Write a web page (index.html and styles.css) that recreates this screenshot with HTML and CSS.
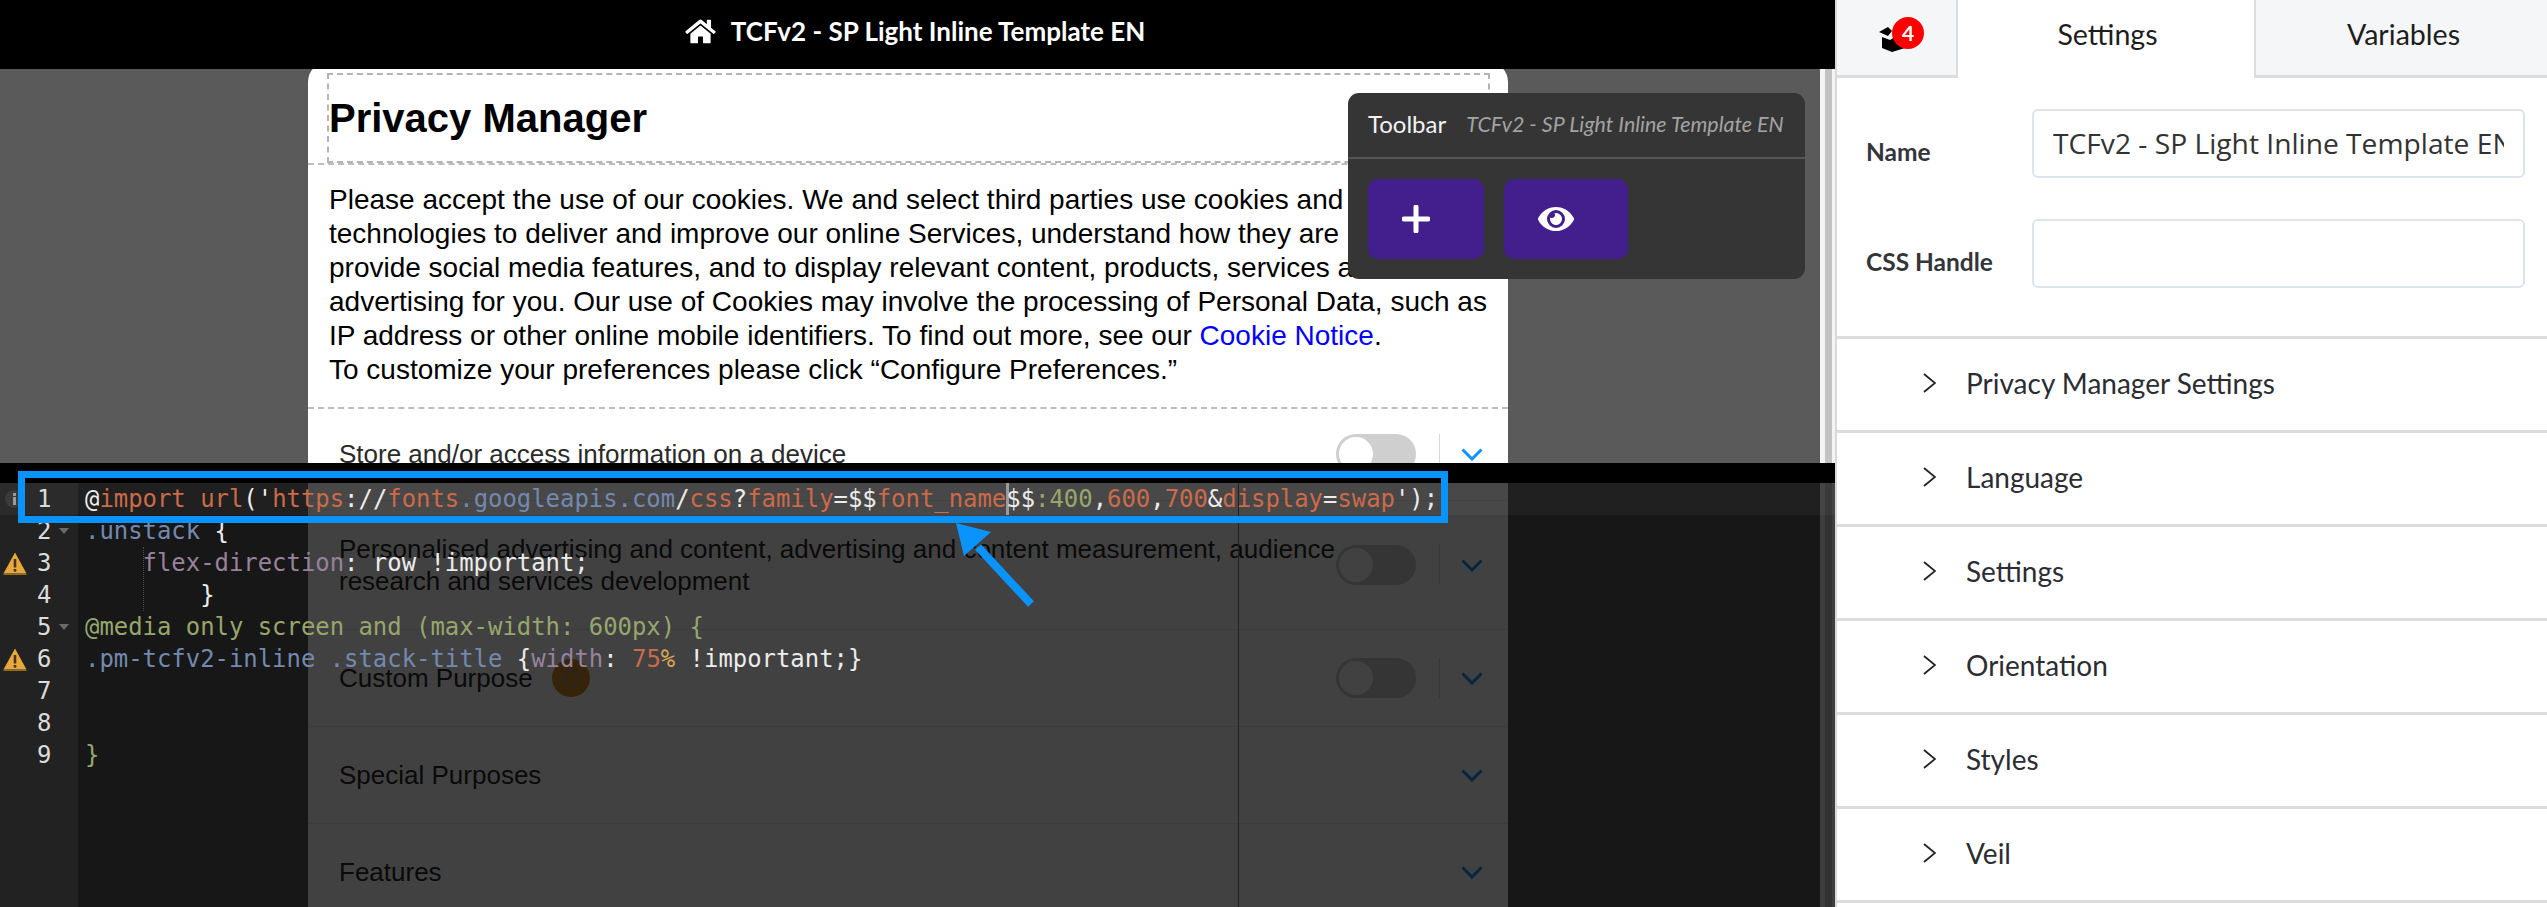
FILE: index.html
```html
<!DOCTYPE html>
<html lang="en">
<head>
<meta charset="utf-8">
<title>TCFv2 - SP Light Inline Template EN</title>
<link rel="stylesheet" href="styles.css">
</head>
<body>
<div class="app">
  <main class="stage">
    <header class="topbar">
      <svg class="home" viewBox="0 0 576 512"><path d="M280.37 148.26L96 300.11V464a16 16 0 0 0 16 16l112.06-.29a16 16 0 0 0 15.92-16V368a16 16 0 0 1 16-16h64a16 16 0 0 1 16 16v95.64a16 16 0 0 0 16 16.05L464 480a16 16 0 0 0 16-16V300L295.67 148.26a12.19 12.19 0 0 0-15.3 0zM571.6 251.47L488 182.56V44.05a12 12 0 0 0-12-12h-56a12 12 0 0 0-12 12v72.61L318.47 43a48 48 0 0 0-61 0L4.34 251.47a12 12 0 0 0-1.6 16.9l25.5 31A12 12 0 0 0 45.15 301l235.22-193.74a12.19 12.19 0 0 1 15.3 0L530.9 301a12 12 0 0 0 16.9-1.6l25.5-31a12 12 0 0 0-1.7-16.93z"/></svg>
      <span class="topbar-title">TCFv2 - SP Light Inline Template EN</span>
    </header>
    <div class="canvas">
      <section class="card">
        <div class="title-section">
          <div class="title-box"><h1 class="title">Privacy Manager</h1></div>
        </div>
        <div class="intro">
          <p class="intro-line">Please accept the use of our cookies. We and select third parties use cookies and similar</p>
          <p class="intro-line">technologies to deliver and improve our online Services, understand how they are used, to</p>
          <p class="intro-line">provide social media features, and to display relevant content, products, services and</p>
          <p class="intro-line">advertising for you. Our use of Cookies may involve the processing of Personal Data, such as</p>
          <p class="intro-line">IP address or other online mobile identifiers. To find out more, see our <a class="link">Cookie Notice</a>.</p>
          <p class="intro-line">To customize your preferences please click “Configure Preferences.”</p>
        </div>
        <div class="rows">
          <div class="row row-first">
            <div class="row-label">Store and/or access information on a device</div>
            <div class="toggle"><span class="knob"></span></div>
            <div class="row-divider"></div>
            <svg class="chev" viewBox="0 0 22 13"><path d="M1.5 1.5L11 11l9.5-9.5"/></svg>
          </div>
          <div class="row">
            <div class="row-label">Personalised advertising and content, advertising and content measurement, audience<br>research and services development</div>
            <div class="toggle"><span class="knob"></span></div>
            <div class="row-divider"></div>
            <svg class="chev" viewBox="0 0 22 13"><path d="M1.5 1.5L11 11l9.5-9.5"/></svg>
          </div>
          <div class="row">
            <div class="row-label row-label-badged">Custom Purpose<span class="custom-badge">C</span></div>
            <div class="toggle"><span class="knob"></span></div>
            <div class="row-divider"></div>
            <svg class="chev" viewBox="0 0 22 13"><path d="M1.5 1.5L11 11l9.5-9.5"/></svg>
          </div>
          <div class="row">
            <div class="row-label">Special Purposes</div>
            <svg class="chev" viewBox="0 0 22 13"><path d="M1.5 1.5L11 11l9.5-9.5"/></svg>
          </div>
          <div class="row">
            <div class="row-label">Features</div>
            <svg class="chev" viewBox="0 0 22 13"><path d="M1.5 1.5L11 11l9.5-9.5"/></svg>
          </div>
        </div>
      </section>
      <div class="scroll-track"><span class="scroll-thumb"></span></div>
    </div>

    <div class="toolbar">
      <div class="toolbar-head">
        <span class="toolbar-name">Toolbar</span>
        <span class="toolbar-sub">TCFv2 - SP Light Inline Template EN</span>
      </div>
      <div class="toolbar-actions">
        <button class="tool tool-add"><svg class="plus" viewBox="0 0 28 28"><path d="M14 2v24M2 14h24"/></svg></button>
        <button class="tool tool-view"><svg class="eye" viewBox="0 0 576 512"><path d="M572.52 241.4C518.29 135.59 410.93 64 288 64S57.68 135.64 3.48 241.41a32.35 32.35 0 0 0 0 29.19C57.71 376.41 165.07 448 288 448s230.32-71.64 284.52-177.41a32.35 32.35 0 0 0 0-29.19zM288 400a144 144 0 1 1 144-144 143.93 143.93 0 0 1-144 144zm0-240a95.31 95.31 0 0 0-25.31 3.79 47.85 47.85 0 0 1-66.9 66.9A95.78 95.78 0 1 0 288 160z"/></svg></button>
      </div>
    </div>

    <div class="editor">
      <div class="editor-bar"></div>
      <div class="editor-body">
        <div class="active-line"></div>
        <div class="print-margin"></div>
        <div class="gutter">
          <div class="gl"><span class="gi"><svg class="info" viewBox="0 0 22 22"><circle cx="11" cy="11" r="9" fill="#3a3a3a"/><rect x="10" y="9" width="3" height="8" fill="#9a9a9a"/><rect x="10" y="5" width="3" height="3" fill="#9a9a9a"/></svg></span><span class="num">1</span></div>
          <div class="gl"><span class="gi"></span><span class="num">2</span><span class="fold"></span></div>
          <div class="gl"><span class="gi"><svg class="warn" viewBox="0 0 24 24"><path d="M12 1.5L23.5 22.5H.5z" fill="#e8a93a"/><path d="M.5 22.5h23v1.5H.5z" fill="#8f6a26"/><rect x="10.7" y="8" width="2.6" height="8.5" fill="#4a3410"/><rect x="10.7" y="18" width="2.6" height="2.6" fill="#4a3410"/></svg></span><span class="num">3</span></div>
          <div class="gl"><span class="gi"></span><span class="num">4</span></div>
          <div class="gl"><span class="gi"></span><span class="num">5</span><span class="fold"></span></div>
          <div class="gl"><span class="gi"><svg class="warn" viewBox="0 0 24 24"><path d="M12 1.5L23.5 22.5H.5z" fill="#e8a93a"/><path d="M.5 22.5h23v1.5H.5z" fill="#8f6a26"/><rect x="10.7" y="8" width="2.6" height="8.5" fill="#4a3410"/><rect x="10.7" y="18" width="2.6" height="2.6" fill="#4a3410"/></svg></span><span class="num">6</span></div>
          <div class="gl"><span class="gi"></span><span class="num">7</span></div>
          <div class="gl"><span class="gi"></span><span class="num">8</span></div>
          <div class="gl"><span class="gi"></span><span class="num">9</span></div>
        </div>
        <div class="code">
          <div class="cl"><span class="w">@</span><span class="o">import url</span><span class="w">('</span><span class="o">https</span><span class="w">://</span><span class="o">fonts</span><span class="b">.googleapis.com</span><span class="w">/</span><span class="o">css</span><span class="w">?</span><span class="o">family</span><span class="w">=$$</span><span class="o">font_name</span><span class="caret"></span><span class="w">$$</span><span class="g">:400</span><span class="w">,</span><span class="o">600</span><span class="w">,</span><span class="o">700</span><span class="w">&amp;</span><span class="o">display</span><span class="w">=</span><span class="o">swap</span><span class="w">');</span></div>
          <div class="cl"><span class="b">.unstack</span> <span class="w">{</span></div>
          <div class="cl">    <span class="m">flex-direction</span><span class="w">: row !important;</span></div>
          <div class="cl">        <span class="w">}</span></div>
          <div class="cl"><span class="g">@media only screen and (max-width: 600px) {</span></div>
          <div class="cl"><span class="b">.pm-tcfv2-inline .stack-title</span> <span class="w">{</span><span class="m">width</span><span class="w">:</span> <span class="o">75</span><span class="y">%</span> <span class="w">!important;}</span></div>
          <div class="cl"> </div>
          <div class="cl"> </div>
          <div class="cl"><span class="g">}</span></div>
        </div>
        <span class="indent-guide"></span>
      </div>
    </div>

    <div class="callout-box"></div>
    <svg class="callout-arrow" viewBox="0 0 76 82"><path class="shaft" d="M75 81L22 24"/><path class="head" d="M0 0L35 9L8 33z"/></svg>
  </main>

  <aside class="panel">
    <nav class="tabs">
      <div class="tab tab-icon">
        <span class="box-wrap">
          <svg class="box" viewBox="0 0 26 26"><path d="M0 6L9 1l4 4-4 5z M3 11l8 3 5-3v-5l10 2v14l-13 4-10-4z"/></svg>
          <span class="badge">4</span>
        </span>
      </div>
      <div class="tab tab-active">Settings</div>
      <div class="tab tab-last">Variables</div>
    </nav>
    <div class="fields">
      <div class="field"><label class="field-label">Name</label><div class="input"><span class="input-text">TCFv2 - SP Light Inline Template EN</span></div></div>
      <div class="field"><label class="field-label">CSS Handle</label><div class="input"></div></div>
    </div>
    <div class="acc"><svg class="acc-chev" viewBox="0 0 13 20"><path d="M1 1l11 9L1 19"/></svg>Privacy Manager Settings</div>
    <div class="acc"><svg class="acc-chev" viewBox="0 0 13 20"><path d="M1 1l11 9L1 19"/></svg>Language</div>
    <div class="acc"><svg class="acc-chev" viewBox="0 0 13 20"><path d="M1 1l11 9L1 19"/></svg>Settings</div>
    <div class="acc"><svg class="acc-chev" viewBox="0 0 13 20"><path d="M1 1l11 9L1 19"/></svg>Orientation</div>
    <div class="acc"><svg class="acc-chev" viewBox="0 0 13 20"><path d="M1 1l11 9L1 19"/></svg>Styles</div>
    <div class="acc"><svg class="acc-chev" viewBox="0 0 13 20"><path d="M1 1l11 9L1 19"/></svg>Veil</div>
  </aside>
</div>
</body>
</html>
```
FILE: styles.css
```css
* { box-sizing: border-box; }
html, body { margin: 0; height: 100%; overflow: hidden; }
body { font-family: "Liberation Sans", Arial, sans-serif; background: #fff; }

.app { display: flex; width: 2547px; height: 907px; }

/* Left stage */
.stage { position: relative; width: 1835px; height: 907px; display: flex; flex-direction: column; overflow: hidden; }
.topbar { position: relative; z-index: 2; height: 69px; flex: none; background: #000; color: #fff; display: flex; align-items: center; justify-content: center; gap: 15px; padding: 0 5px 7px 0; }
.home { width: 31px; height: 27px; fill: #fff; }
.topbar-title { font-family: Lato, sans-serif; font-weight: 700; font-size: 26px; }

.canvas { flex: 1; min-height: 0; background: #5a5a5a; display: flex; padding-left: 308px; }
.card { width: 1200px; height: 870px; margin-top: -7px; background: #fff; border-radius: 20px; flex: none; }
.title-section { height: 103px; padding: 11px 18px 0 19px; border-bottom: 2px dashed #bdbdbd; }
.title-box { height: 90px; border: 2px dashed #b4b4b4; display: flex; align-items: center; }
.title { margin: 0; font-size: 40px; font-weight: 700; color: #000; line-height: 1; }
.intro { height: 244px; padding: 18px 20px 0 21px; border-bottom: 2px dashed #bdbdbd; }
.intro-line { margin: 0; font-size: 28px; line-height: 34px; color: #000; white-space: nowrap; }
.link { color: #0000ff; }

.row { display: flex; align-items: center; padding: 32px 25px 32px 31px; border-bottom: 1px solid #e6e6e6; }
.row-first { padding: 29px 25px 30px 31px; }
.row-label { flex: 1; font-size: 26px; line-height: 32px; color: #2a2a2a; }
.row-label-badged { display: flex; align-items: center; height: 32px; }
.custom-badge { display: flex; width: 38px; height: 38px; margin-left: 19px; flex: none; border-radius: 50%; background: #d08a2a; color: #b09060; font-weight: 700; align-items: center; justify-content: center; }
.toggle { width: 80px; height: 40px; margin: -4px 0; padding: 3px; border-radius: 20px; background: #cfcfcf; }
.knob { display: block; width: 34px; height: 34px; border-radius: 50%; background: #fff; }
.row-divider { width: 1px; height: 40px; margin: -4px 21px -4px 23px; background: #d8d8d8; }
.chev { width: 22px; height: 13px; fill: none; stroke: #0d94fc; stroke-width: 3; }

.scroll-track { flex: none; width: 15px; height: 100%; margin-left: 312px; padding: 0 3px 0 5px; background: #f4f4f4; }
.scroll-thumb { display: block; height: 100%; background: #c2c2c2; }

/* Floating toolbar */
.toolbar { position: absolute; z-index: 3; left: 1348px; top: 93px; width: 457px; height: 186px; border-radius: 11px; background: #353535; }
.toolbar-head { height: 66px; padding: 0 20px 3px; display: flex; align-items: center; gap: 20px; border-bottom: 2px solid #555; white-space: nowrap; }
.toolbar-name { font-family: Lato, sans-serif; font-size: 24px; color: #f2f2f2; }
.toolbar-sub { font-family: Lato, sans-serif; font-size: 21.4px; font-style: italic; color: #a3a3a3; }
.toolbar-actions { display: flex; gap: 20px; padding: 20px 20px; }
.tool { height: 80px; border: 0; border-radius: 10px; background: #421f8c; padding: 0; display: flex; align-items: center; }
.tool-add { width: 116px; padding-left: 34px; }
.tool-view { width: 124px; padding-left: 34px; }
.plus { width: 28px; height: 28px; fill: none; stroke: #fff; stroke-width: 5; stroke-linecap: round; }
.eye { width: 36px; height: 32px; fill: #fff; }

/* Code editor overlay */
.editor { position: absolute; z-index: 4; left: 0; top: 463px; width: 1835px; height: 444px; background: rgba(0, 0, 0, .745); display: flex; flex-direction: column; }
.editor-bar { height: 20px; background: #000; flex: none; }
.editor-body { position: relative; flex: 1; display: flex; font-family: "DejaVu Sans Mono", monospace; font-size: 23.92px; line-height: 32px; }
.active-line { position: absolute; left: 0; right: 0; top: 0; height: 32px; background: rgba(255, 255, 255, .04); }
.print-margin { position: absolute; left: 1238px; top: 0; bottom: 0; width: 1px; background: #202020; }
.gutter { position: relative; width: 78px; flex: none; background: rgba(255, 255, 255, .05); color: #dcdcdc; }
.gl { height: 32px; display: flex; align-items: center; }
.gi { width: 37px; flex: none; display: flex; align-items: center; padding-left: 3px; }
.warn { width: 24px; height: 24px; }
.info { width: 22px; height: 22px; }
.num { width: 15px; flex: none; }
.fold { width: 0; height: 0; margin-left: 7px; border-left: 5px solid transparent; border-right: 5px solid transparent; border-top: 6px solid #6b6b6b; }
.code { position: relative; margin: 0; padding-left: 7px; color: #eee; }
.cl { height: 32px; white-space: pre; }
.w { color: #ececec; }
.o { color: #cc6a4a; }
.b { color: #7389b0; }
.g { color: #97a66c; }
.m { color: #98829c; }
.y { color: #d8a95a; }
.caret { display: inline-block; width: 3px; height: 32px; margin: 0 -3px 0 0; vertical-align: top; background: #9a9a9a; }
.indent-guide { position: absolute; left: 143px; top: 64px; height: 64px; border-left: 1px dotted #4a4a4a; }

.callout-box { position: absolute; z-index: 5; left: 18px; top: 471px; width: 1430px; height: 52px; border: 7px solid #0a94fb; }
.callout-arrow { position: absolute; z-index: 5; left: 956px; top: 523px; width: 76px; height: 82px; overflow: visible; }
.shaft { fill: none; stroke: #0a94fb; stroke-width: 8; }
.head { fill: #0a94fb; }

/* Right panel */
.panel { flex: 1; min-width: 0; border-left: 2px solid #d9d9d9; background: #fff; color: #2b2d33; font-family: Lato, sans-serif; }
.tabs { display: flex; height: 78px; }
.tab { flex: 1; background: #f5f6f8; border-bottom: 3px solid #dcdcdc; display: flex; align-items: center; justify-content: center; font-size: 28.6px; color: #1d1d1d; padding-bottom: 7px; }
.tab-icon { flex: none; width: 121px; border-right: 2px solid #dcdcdc; }
.tab-active { flex: none; width: 298px; background: #fff; border-bottom: 0; padding: 0 0 10px 3px; border-right: 2px solid #dcdcdc; }
.tab-last { padding-left: 4px; }
.box-wrap { position: relative; width: 45px; height: 34px; margin: 0 0 1px 10px; }
.box { position: absolute; left: 0; top: 9px; width: 26px; height: 26px; fill: #000; }
.badge { position: absolute; left: 13px; top: 0; width: 32px; height: 32px; border-radius: 50%; background: #f00; color: #fff; font-weight: 700; font-size: 21px; line-height: 32px; text-align: center; }
.fields { height: 261px; padding: 31px 22px 0 29px; border-bottom: 3px solid #dcdcdc; }
.field { display: flex; align-items: flex-end; height: 69px; margin-bottom: 41px; }
.field-label { width: 166px; flex: none; font-weight: 700; font-size: 24.5px; color: #33353a; padding-bottom: 12px; }
.input { flex: 1; height: 69px; min-width: 0; border: 2px solid #dce5ec; border-radius: 6px; padding: 0 19px 2px; display: flex; align-items: center; }
.input-text { flex: 1; min-width: 0; display: block; overflow: hidden; white-space: nowrap; font-family: "Open Sans", sans-serif; font-size: 28.2px; color: #333; }
.acc { height: 94px; display: flex; align-items: center; gap: 30px; padding: 0 0 3px 86px; border-bottom: 3px solid #dcdcdc; font-size: 28px; }
.acc-chev { width: 13px; height: 20px; flex: none; fill: none; stroke: #222; stroke-width: 1.8; }
```
